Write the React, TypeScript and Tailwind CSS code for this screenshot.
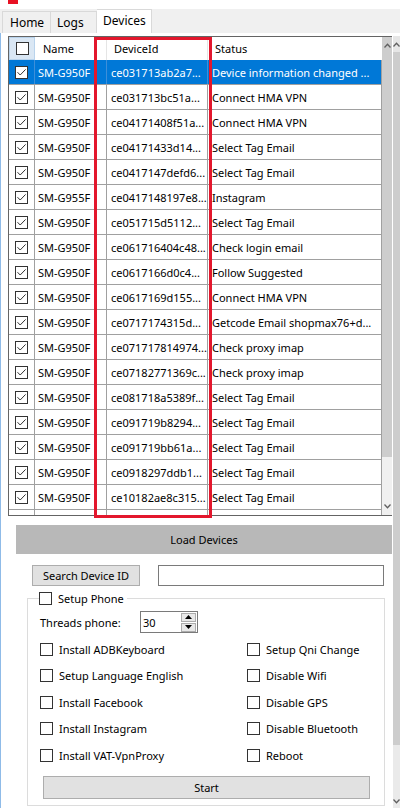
import React from 'react'

const ROWS: [string, string, string][] = [
  ['SM-G950F', 'ce031713ab2a7...', 'Device information changed ...'],
  ['SM-G950F', 'ce031713bc51a...', 'Connect HMA VPN'],
  ['SM-G950F', 'ce04171408f51a...', 'Connect HMA VPN'],
  ['SM-G950F', 'ce04171433d14...', 'Select Tag Email'],
  ['SM-G950F', 'ce0417147defd6...', 'Select Tag Email'],
  ['SM-G955F', 'ce0417148197e8...', 'Instagram'],
  ['SM-G950F', 'ce051715d5112...', 'Select Tag Email'],
  ['SM-G950F', 'ce061716404c48...', 'Check login email'],
  ['SM-G950F', 'ce0617166d0c4...', 'Follow Suggested'],
  ['SM-G950F', 'ce0617169d155...', 'Connect HMA VPN'],
  ['SM-G950F', 'ce0717174315d...', 'Getcode Email shopmax76+d...'],
  ['SM-G950F', 'ce071717814974...', 'Check proxy imap'],
  ['SM-G950F', 'ce07182771369c...', 'Check proxy imap'],
  ['SM-G950F', 'ce081718a5389f...', 'Select Tag Email'],
  ['SM-G950F', 'ce091719b8294...', 'Select Tag Email'],
  ['SM-G950F', 'ce091719bb61a...', 'Select Tag Email'],
  ['SM-G950F', 'ce0918297ddb1...', 'Select Tag Email'],
  ['SM-G950F', 'ce10182ae8c315...', 'Select Tag Email'],
]

const LEFT_OPTS = [
  'Install ADBKeyboard',
  'Setup Language English',
  'Install Facebook',
  'Install Instagram',
  'Install VAT-VpnProxy',
]
const RIGHT_OPTS = [
  'Setup Qni Change',
  'Disable Wifi',
  'Disable GPS',
  'Disable Bluetooth',
  'Reboot',
]

function CheckBox({ checked }: { checked?: boolean }) {
  return (
    <span className="flex h-[13px] w-[13px] shrink-0 items-center justify-center border border-[#333333] bg-white">
      {checked && (
        <svg width="11" height="11" viewBox="0 0 11 11">
          <path d="M1.5 5.2 L4.2 8 L9.6 2.4" fill="none" stroke="#333333" strokeWidth="1" />
        </svg>
      )}
    </span>
  )
}

function Chevron({ up }: { up?: boolean }) {
  return (
    <svg width="7" height="5" viewBox="0 0 7 5">
      <path
        d={up ? 'M0.5 4.5 L3.5 1.2 L6.5 4.5' : 'M0.5 0.5 L3.5 3.8 L6.5 0.5'}
        fill="none"
        stroke="#606060"
        strokeWidth="1.3"
      />
    </svg>
  )
}

function Triangle({ up }: { up?: boolean }) {
  return (
    <svg width="7" height="4" viewBox="0 0 7 4">
      <path d={up ? 'M0 4 L3.5 0 L7 4 Z' : 'M0 0 L3.5 4 L7 0 Z'} fill="#000000" />
    </svg>
  )
}

export default function App() {
  return (
    <div className="flex h-[808px] w-[400px] flex-col overflow-hidden bg-white font-['Noto_Sans',sans-serif] text-[11px] leading-none text-black">
      {/* window title remnant */}
      <div className="h-[9px] shrink-0 bg-white pl-[8px]">
        <div className="h-[4px] w-[10px] bg-[#e81123]" />
      </div>

      {/* tabs */}
      <div className="flex h-[24px] shrink-0 items-end bg-[#f0f0f0] pl-[2px] text-[12px]">
        <div className="flex h-[22px] w-[49px] items-center border border-b-0 border-[#d9d9d9] pl-[7px]">
          Home
        </div>
        <div className="flex h-[22px] w-[46px] items-center border border-b-0 border-l-0 border-[#d9d9d9] pl-[6px]">
          Logs
        </div>
        <div className="flex h-[24px] w-[55px] items-center border border-b-0 border-l-0 border-[#d9d9d9] bg-white pb-[2px] pl-[6px]">
          Devices
        </div>
      </div>

      <div className="flex min-h-0 flex-1">
        <div className="w-[393px] shrink-0 border-l border-[#8fbbe8] pt-[3px]">
          {/* devices grid */}
          <div className="relative ml-[7px] flex h-[480px] w-[384px] border-y border-l border-[#646464]">
            <div className="w-[373px] overflow-hidden">
              <div className="flex h-[23px]">
                <div className="flex w-[26px] items-center justify-center border border-[#b9d3ec] bg-[#dae7f4]">
                  <CheckBox />
                </div>
                <div className="flex w-[72px] items-center border-r border-[#e5e5e5] pl-[8px]">Name</div>
                <div className="flex w-[101px] items-center border-r border-[#e5e5e5] pl-[7px]">DeviceId</div>
                <div className="flex w-[174px] items-center pl-[7px]">Status</div>
              </div>
              {ROWS.map((r, i) => {
                const sel = i === 0
                return (
                  <div
                    key={i}
                    className={
                      sel
                        ? 'flex h-[25px] border-b border-[#a0a0a0] bg-[#0078d7] text-white'
                        : 'flex h-[25px] border-b border-[#a0a0a0]'
                    }
                  >
                    <div className={`flex w-[26px] items-center justify-center border-r ${sel ? 'border-[#3d8fd9]' : 'border-[#a0a0a0]'}`}>
                      <CheckBox checked />
                    </div>
                    <div className={`flex w-[72px] items-center overflow-hidden whitespace-nowrap border-r pl-[3px] ${sel ? 'border-[#3d8fd9]' : 'border-[#a0a0a0]'}`}>
                      {r[0]}
                    </div>
                    <div className={`flex w-[101px] items-center overflow-hidden whitespace-nowrap border-r pl-[4px] ${sel ? 'border-[#3d8fd9]' : 'border-[#a0a0a0]'}`}>
                      {r[1]}
                    </div>
                    <div className="flex w-[174px] items-center overflow-hidden whitespace-nowrap border-r border-[#a0a0a0] pl-[4px]">
                      {r[2]}
                    </div>
                  </div>
                )
              })}
              {/* partially visible next row */}
              <div className="flex h-[25px]">
                <div className="w-[26px] border-r border-[#a0a0a0]" />
                <div className="w-[72px] border-r border-[#a0a0a0]" />
                <div className="w-[101px] border-r border-[#a0a0a0]" />
                <div className="w-[174px] border-r border-[#a0a0a0]" />
              </div>
            </div>
            {/* grid scrollbar */}
            <div className="flex w-[10px] flex-col">
              <div className="flex h-[420px] flex-col items-center bg-[#cdcdcd] pt-[6px]">
                <Chevron up />
              </div>
              <div className="flex flex-1 flex-col items-center justify-end bg-[#f0f0f0] pb-[6px]">
                <Chevron />
              </div>
            </div>
            {/* red annotation */}
            <div className="pointer-events-none absolute left-[85px] top-[0px] h-[481px] w-[118px] border-[3px] border-[#e3172d]" />
          </div>

          <button className="ml-[15px] mt-[9px] flex h-[29px] w-[376px] items-center justify-center bg-[#b8b8b8]">
            Load Devices
          </button>

          <div className="mt-[11px] flex items-center">
            <button className="ml-[31px] flex h-[21px] w-[108px] items-center justify-center border border-[#adadad] bg-[#e1e1e1]">
              Search Device ID
            </button>
            <div className="ml-[18px] h-[21px] w-[226px] border border-[#7a7a7a] bg-white" />
          </div>

          <fieldset className="ml-[26px] mt-[5px] w-[358px] border border-[#dcdcdc] pb-[6px] pl-[11px]">
            <legend className="pr-[3px]">
              <span className="flex h-[15px] items-center gap-[6px]">
                <CheckBox />
                Setup Phone
              </span>
            </legend>
            <div className="mt-[5px] flex h-[22px] items-center">
              <div className="w-[101px] pl-[1px]">Threads phone:</div>
              <div className="flex h-[22px] w-[58px] items-center justify-between border border-[#7a7a7a] pl-[2px] pr-[1px]">
                <span>30</span>
                <div className="flex flex-col gap-[1px]">
                  <div className="flex h-[9px] w-[15px] items-center justify-center border border-[#acacac] bg-[#e8e8e8]">
                    <Triangle up />
                  </div>
                  <div className="flex h-[9px] w-[15px] items-center justify-center border border-[#acacac] bg-[#e8e8e8]">
                    <Triangle />
                  </div>
                </div>
              </div>
            </div>
            <div className="mt-[3px] grid grid-cols-[208px_1fr]">
              {LEFT_OPTS.map((l, i) => (
                <React.Fragment key={l}>
                  <div className="flex h-[26.5px] items-center gap-[6px] pl-[1px]">
                    <CheckBox />
                    {l}
                  </div>
                  <div className="flex h-[26.5px] items-center gap-[6px]">
                    <CheckBox />
                    {RIGHT_OPTS[i]}
                  </div>
                </React.Fragment>
              ))}
            </div>
            <button className="ml-[4px] mt-[7px] flex h-[23px] w-[327px] items-center justify-center border border-[#adadad] bg-[#e1e1e1]">
              Start
            </button>
          </fieldset>
        </div>

        {/* outer scrollbar */}
        <div className="mt-[3px] flex w-[7px] flex-col">
          <div className="flex h-[16px] items-center justify-center bg-[#e6e6e6]">
            <Chevron up />
          </div>
          <div className="h-[693px] bg-[#cdcdcd]" />
          <div className="flex flex-1 items-end justify-center bg-[#eaeaea] pb-[4px]">
            <Chevron />
          </div>
        </div>
      </div>
    </div>
  )
}
